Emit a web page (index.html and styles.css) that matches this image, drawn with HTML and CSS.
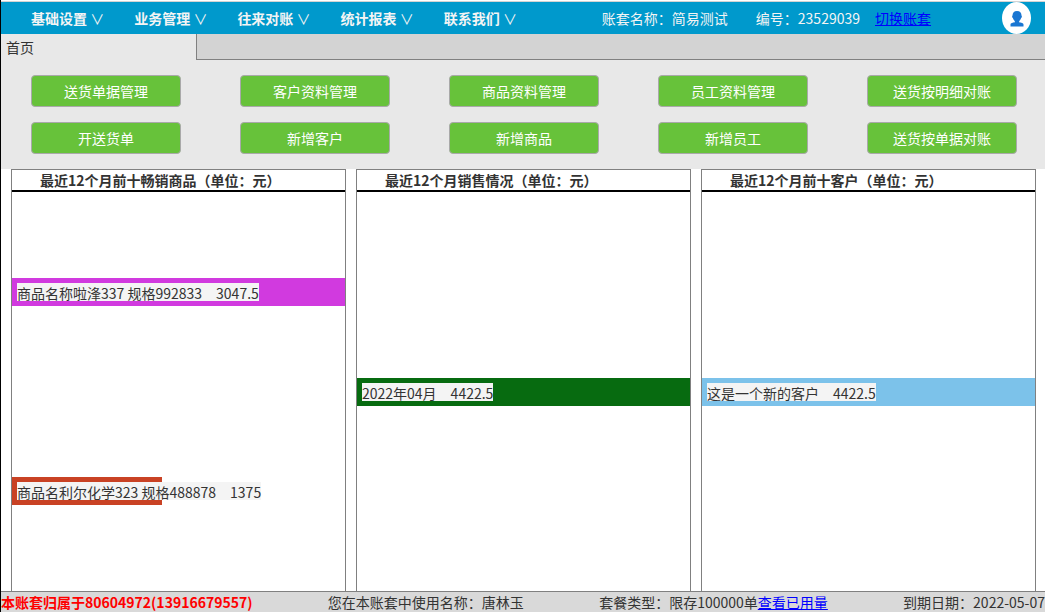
FILE: index.html
```html
<!DOCTYPE html>
<html lang="zh-CN">
<head>
<meta charset="utf-8">
<title>首页</title>
<link rel="stylesheet" href="styles.css">
</head>
<body>
<div class="app">
  <header class="topbar">
    <nav class="menu">
      <button class="menu-item" type="button">基础设置 <span class="caret">∨</span></button>
      <button class="menu-item" type="button">业务管理 <span class="caret">∨</span></button>
      <button class="menu-item" type="button">往来对账 <span class="caret">∨</span></button>
      <button class="menu-item" type="button">统计报表 <span class="caret">∨</span></button>
      <button class="menu-item" type="button">联系我们 <span class="caret">∨</span></button>
    </nav>
    <div class="account">
      <span class="account-name">账套名称：简易测试</span>
      <span class="account-code">编号：23529039</span>
      <a class="link" href="#">切换账套</a>
      <button class="avatar" type="button" aria-label="用户">
        <svg width="14" height="16" viewBox="0 0 14 16" aria-hidden="true"><path fill="#1976d2" d="M7 0C4 0 2.500 1.800 2.500 4.500C1.900 4.900 2 6.700 2.900 7C3.300 8.500 4 9.400 4.800 10V11.200C3 11.800 0.500 11.800 0.500 13.500V15.500H13.500V13.500C13.500 11.800 11 11.800 9.200 11.200V10C10 9.400 10.700 8.500 11.100 7C12 6.700 12.100 4.900 11.500 4.500C11.500 1.800 10 0 7 0Z"/></svg>
      </button>
    </div>
  </header>
  <div class="tabs">
    <button class="tab" type="button">首页</button>
    <div class="tabs-rest"></div>
  </div>
  <section class="shortcuts">
    <div class="shortcut-row">
      <button class="shortcut" type="button">送货单据管理</button>
      <button class="shortcut" type="button">客户资料管理</button>
      <button class="shortcut" type="button">商品资料管理</button>
      <button class="shortcut" type="button">员工资料管理</button>
      <button class="shortcut" type="button">送货按明细对账</button>
    </div>
    <div class="shortcut-row">
      <button class="shortcut" type="button">开送货单</button>
      <button class="shortcut" type="button">新增客户</button>
      <button class="shortcut" type="button">新增商品</button>
      <button class="shortcut" type="button">新增员工</button>
      <button class="shortcut" type="button">送货按单据对账</button>
    </div>
  </section>
  <main class="charts">
    <section class="chart">
      <h2 class="chart-title">最近12个月前十畅销商品（单位：元）</h2>
      <div class="bars">
        <div class="bar bar-magenta" style="width: 100%"><span class="bar-label">商品名称啦浲337 规格992833&emsp;3047.5</span></div>
        <div class="bar bar-red" style="width: 45%"><span class="bar-label">商品名利尔化学323 规格488878&emsp;1375</span></div>
      </div>
    </section>
    <section class="chart">
      <h2 class="chart-title">最近12个月销售情况（单位：元）</h2>
      <div class="bars">
        <div class="bar bar-green" style="width: 100%"><span class="bar-label">2022年04月&emsp;4422.5</span></div>
      </div>
    </section>
    <section class="chart">
      <h2 class="chart-title">最近12个月前十客户（单位：元）</h2>
      <div class="bars">
        <div class="bar bar-blue" style="width: 100%"><span class="bar-label">这是一个新的客户&emsp;4422.5</span></div>
      </div>
    </section>
  </main>
  <footer class="statusbar">
    <strong class="owner">本账套归属于80604972(13916679557)</strong>
    <span>您在本账套中使用名称：唐林玉</span>
    <span>套餐类型：限存100000单<a class="link" href="#">查看已用量</a></span>
    <span>到期日期：2022-05-07</span>
  </footer>
</div>
</body>
</html>
```

FILE: styles.css
```css
* { box-sizing: border-box; }
body {
  margin: 0;
  font-family: "Noto Sans CJK SC", sans-serif;
  font-size: 14px;
  line-height: 20px;
  color: #333;
  background: #fff;
}
button {
  font: inherit;
  color: inherit;
  background: none;
  border: 0;
  margin: 0;
  padding: 0;
  cursor: pointer;
}
.link { color: #00f; text-decoration: underline; }
.app {
  display: flex;
  flex-direction: column;
  height: 100vh;
  padding-top: 1px;
  border-left: 1px solid #000;
  white-space: nowrap;
  overflow: hidden;
}
.topbar {
  display: flex;
  justify-content: space-between;
  align-items: center;
  height: 33px;
  padding: 0 14px 0 30px;
  border-top: 1px solid #d3d3d3;
  background: #09c;
  color: #f4f4f4;
}
.menu { display: flex; gap: 30px; }
.menu-item { font-weight: bold; }
.caret { font-weight: normal; }
.account { display: flex; align-items: center; }
.account-name { margin-right: 28px; }
.account-code { margin-right: 15px; }
.avatar {
  display: flex;
  align-items: center;
  justify-content: center;
  width: 29px;
  height: 32px;
  margin-left: 71px;
  padding-top: 2px;
  border-radius: 50%;
  background: #fff;
}
.tabs { display: flex; height: 26px; background: #e8e8e8; }
.tab { width: 195px; padding: 0 5px; text-align: left; }
.tabs-rest {
  flex: 1;
  background: #d3d3d3;
  border-left: 1px solid #808080;
  border-bottom: 1px solid #808080;
}
.shortcuts {
  display: flex;
  flex-direction: column;
  gap: 15px;
  padding: 15px 28px 15px 30px;
  background: #e8e8e8;
}
.shortcut-row { display: flex; justify-content: space-between; }
.shortcut {
  width: 150px;
  height: 32px;
  border: 1px solid #a9a9a9;
  border-radius: 4px;
  background: #67c23a;
  color: #fff;
}
.charts {
  flex: 1;
  display: grid;
  grid-template-columns: repeat(3, 1fr);
  gap: 10px;
  padding: 0 9px 0 10px;
}
.chart {
  display: flex;
  flex-direction: column;
  border: 1px solid #808080;
  border-bottom: 0;
}
.chart-title {
  margin: 0;
  padding-left: 28px;
  border-bottom: 2px solid #000;
  font-size: 14px;
  line-height: 20px;
}
.bars {
  flex: 1;
  display: flex;
  flex-direction: column;
  justify-content: space-around;
}
.bar { display: flex; height: 28px; padding: 5px; }
.bar-label {
  flex: none;
  height: 18px;
  background: #f4f4f4;
}
.bar-magenta { background: #d13adf; }
.bar-red { background: #c94224; }
.bar-green { background: #076b10; }
.bar-blue { background: #7cc2ea; }
.statusbar {
  display: flex;
  justify-content: space-between;
  border-top: 1px solid #808080;
  background: #d9d9d9;
}
.owner { color: #f00; }
```
